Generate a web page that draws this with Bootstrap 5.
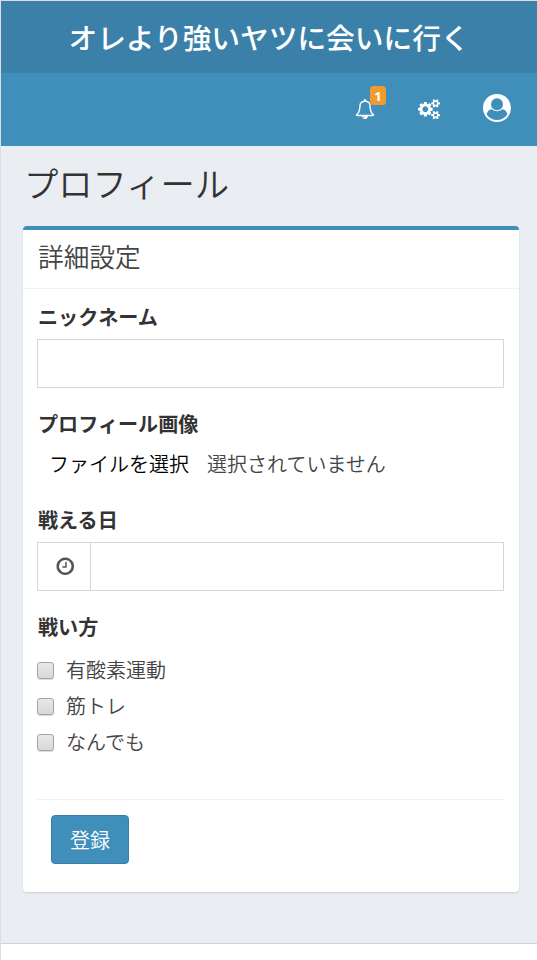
<!DOCTYPE html>
<html lang="ja">
<head>
<meta charset="utf-8">
<meta name="viewport" content="width=device-width, initial-scale=1">
<title>プロフィール</title>
<link href="https://cdn.jsdelivr.net/npm/bootstrap@5.3.0/dist/css/bootstrap.min.css" rel="stylesheet">
<style>
  body { font-family: "Noto Sans CJK JP", sans-serif; font-size: 20px; line-height: 28px; color: #333; background: #fff; }
  .page-shell { border-left: 1px solid #dcdddf; border-top: 1px solid #dcdddf; height: 960px; overflow: hidden; }
  .brand-bar { height: 72px; background: #3b80a9; font-size: 28.7px; line-height: 72px; font-weight: 500; }
  .tool-bar { height: 73px; background: #408fbb; padding: 0 26px 3px 0; }
  .tool-bar svg, .clock-cell svg { display: block; fill: currentColor; }
  .bell-link { margin-right: 43px; }
  .bell-link svg, .cogs-link svg { margin-top: 2px; }
  .cogs-link { margin-right: 43px; }
  .count-badge { position: absolute; left: 15px; top: -11px; width: 16px; height: 19px; border-radius: 3.5px; background: #f29a2e; font: 700 13px/20px "Noto Sans", sans-serif; }
  .main-area { height: 798px; background: #eaeef3; border-bottom: 1px solid #ced4df; padding: 15px 18px 0 22px; }
  .page-title { font-size: 34.3px; line-height: 42px; font-weight: 350; margin: 0 0 23px 1px; }
  .panel { height: 666px; border: 0; border-top: 4px solid #408fbb; border-radius: 4px; box-shadow: 0 1px 2px rgba(0,0,0,.12); }
  .panel-head { height: 59px; flex-shrink: 0; border-bottom: 1px solid #f2f2f2; padding: 11px 15px; font-size: 25.7px; line-height: 30px; font-weight: 350; color: #444; }
  .panel-main { padding: 15px 15px 15px 14px; font-weight: 350; }
  .field-label { display: block; font-weight: 700; line-height: 28px; margin: -1px 0 8px 1px; font-size: 20.1px; }
  .form-control, .clock-cell { border: 1px solid #d3d7e1; border-radius: 0 !important; height: 49px; background: #fff; }
  .field-gap { margin-bottom: 23px; }
  .clock-cell { width: 54px; color: #555; padding-left: 1px; }
  .file-row { height: 28px; padding-left: 12px; gap: 18px; margin: 12px 0 29px; }
  .way-label { margin-bottom: 11px; }
  .option-row { height: 36px; gap: 12px; }
  .option-row, .file-row { color: #444; }
  .option-row .form-check-input { width: 17px; height: 17px; margin: 0; border: 1px solid #a4a4a4; border-radius: 3px; background: linear-gradient(#e8e8e8, #d8d8d8); box-shadow: 0 1px 1px rgba(0,0,0,.15); }
  .panel-foot { border-top: 1px solid #f2f2f2; margin-top: 39px; padding: 15px 14px; }
  .submit-btn { --bs-btn-bg: #408fbb; --bs-btn-border-color: #3a7fab; --bs-btn-font-size: 20px; --bs-btn-border-radius: 4px; --bs-btn-font-weight: 350; width: 78px; height: 49px; padding: 0; line-height: 47px; }
</style>
<script src="https://cdn.jsdelivr.net/npm/bootstrap@5.3.0/dist/js/bootstrap.bundle.min.js"></script>
</head>
<body>
<div class="page-shell">
  <header class="text-white">
    <div class="brand-bar text-center">オレより強いヤツに会いに行く</div>
    <nav class="tool-bar d-flex align-items-center justify-content-end">
      <a href="#" class="bell-link position-relative text-white text-decoration-none">
        <svg width="20" height="20" viewBox="0 0 1792 1792"><path d="M912 1696q0-16-16-16-59 0-101.5-42.5t-42.5-101.5q0-16-16-16t-16 16q0 73 51.5 124.5t124.5 51.5q16 0 16-16zm-666-288h1300q-266-300-266-832 0-51-24-105t-69-103-121.5-80.5-169.5-31.5-169.5 31.5-121.5 80.5-69 103-24 105q0 532-266 832zm1482 0q0 52-38 90t-90 38h-448q0 106-75 181t-181 75-181-75-75-181h-448q-52 0-90-38t-38-90q50-42 91-88t85-119.5 74.5-158.5 50-206 19.5-260q0-152 117-282.5t307-158.5q-8-19-8-39 0-40 28-68t68-28 68 28 28 68q0 20-8 39 190 28 307 158.5t117 282.5q0 139 19.5 260t50 206 74.5 158.5 85 119.5 91 88z"/></svg>
        <span class="count-badge text-center">1</span>
      </a>
      <a href="#" class="cogs-link text-white">
        <svg width="22" height="20.5" viewBox="0 0 1920 1792"><path d="M896 896q0-106-75-181t-181-75-181 75-75 181 75 181 181 75 181-75 75-181zm768 512q0-52-38-90t-90-38-90 38-38 90q0 53 37.5 90.5t90.5 37.5 90.5-37.5 37.5-90.5zm0-1024q0-52-38-90t-90-38-90 38-38 90q0 53 37.5 90.5t90.5 37.5 90.5-37.5 37.5-90.5zm-384 421v185q0 10-7 19.5t-16 10.5l-155 24q-11 35-32 76 34 48 90 115 7 11 7 20 0 12-7 19-23 30-82.5 89.5t-78.5 59.5q-11 0-21-7l-115-90q-37 19-77 31-11 108-23 155-7 24-30 24h-186q-11 0-20-7.5t-10-17.5l-23-153q-34-10-75-31l-118 89q-7 7-20 7-11 0-21-8-144-133-144-160 0-9 7-19 10-14 41-53t47-61q-23-44-35-82l-152-24q-10-1-17-9.5t-7-19.5v-185q0-10 7-19.5t16-10.5l155-24q11-35 32-76-34-48-90-115-7-11-7-20 0-12 7-20 22-30 82-89t79-59q11 0 21 7l115 90q34-18 77-32 11-108 23-154 7-24 30-24h186q11 0 20 7.5t10 17.5l23 153q34 10 75 31l118-89q8-7 20-7 11 0 21 8 144 133 144 160 0 8-7 19-12 16-42 54t-45 60q23 48 34 82l152 23q10 2 17 10.5t7 19.5zm640 533v140q0 16-149 31-12 27-30 52 51 113 51 138 0 4-4 7-122 71-124 71-8 0-46-47t-52-68q-20 2-30 2t-30-2q-14 21-52 68t-46 47q-2 0-124-71-4-3-4-7 0-25 51-138-18-25-30-52-149-15-149-31v-140q0-16 149-31 13-29 30-52-51-113-51-138 0-4 4-7 4-2 35-20t59-34 30-16q8 0 46 46.5t52 67.5q20-2 30-2t30 2q51-71 92-112l6-2q4 0 124 70 4 3 4 7 0 25-51 138 17 23 30 52 149 15 149 31zm0-1024v140q0 16-149 31-12 27-30 52 51 113 51 138 0 4-4 7-122 71-124 71-8 0-46-47t-52-68q-20 2-30 2t-30-2q-14 21-52 68t-46 47q-2 0-124-71-4-3-4-7 0-25 51-138-18-25-30-52-149-15-149-31v-140q0-16 149-31 13-29 30-52-51-113-51-138 0-4 4-7 4-2 35-20t59-34 30-16q8 0 46 46.5t52 67.5q20-2 30-2t30 2q51-71 92-112l6-2q4 0 124 70 4 3 4 7 0 25-51 138 17 23 30 52 149 15 149 31z"/></svg>
      </a>
      <a href="#" class="text-white">
        <svg width="28" height="28" viewBox="0 0 28 28"><circle cx="14" cy="14" r="14"/><path fill="#408fbb" d="M3.700 20.400C4.300 17.600 5.700 15.400 8.900 15.200a7.300 7.300 0 0 0 10.200 0c3.200.2 4.600 2.400 5.200 5.200A12.200 12.200 0 0 1 3.700 20.400z"/><circle cx="14" cy="10.300" r="6" fill="#408fbb"/></svg>
      </a>
    </nav>
  </header>
  <main class="main-area">
    <h1 class="page-title">プロフィール</h1>
    <section class="card panel">
      <div class="panel-head">詳細設定</div>
      <form class="panel-main">
        <label class="field-label" for="nick">ニックネーム</label>
        <input id="nick" class="form-control field-gap" type="text">
        <span class="field-label">プロフィール画像</span>
        <div class="file-row d-flex align-items-center"><span class="text-black">ファイルを選択</span><span>選択されていません</span></div>
        <label class="field-label" for="day">戦える日</label>
        <div class="input-group field-gap flex-nowrap">
          <span class="clock-cell d-flex align-items-center justify-content-center border-end-0"><svg width="20.5" height="20.5" viewBox="0 0 1792 1792"><path d="M1024 544v448q0 14-9 23t-23 9h-320q-14 0-23-9t-9-23v-64q0-14 9-23t23-9h224v-352q0-14 9-23t23-9h64q14 0 23 9t9 23zm416 352q0-148-73-273t-198-198-273-73-273 73-198 198-73 273 73 273 198 198 273 73 273-73 198-198 73-273zm224 0q0 209-103 385.500t-279.500 279.500-385.500 103-385.500-103-279.500-279.500-103-385.500 103-385.500 279.500-279.500 385.500-103 385.500 103 279.500 279.500 103 385.500z"/></svg></span>
          <input id="day" class="form-control" type="text">
        </div>
        <span class="field-label way-label">戦い方</span>
        <label class="option-row d-flex align-items-center"><input class="form-check-input" type="checkbox">有酸素運動</label>
        <label class="option-row d-flex align-items-center"><input class="form-check-input" type="checkbox">筋トレ</label>
        <label class="option-row d-flex align-items-center"><input class="form-check-input" type="checkbox">なんでも</label>
        <div class="panel-foot"><button type="button" class="btn btn-primary submit-btn">登録</button></div>
      </form>
    </section>
  </main>
</div>
</body>
</html>
